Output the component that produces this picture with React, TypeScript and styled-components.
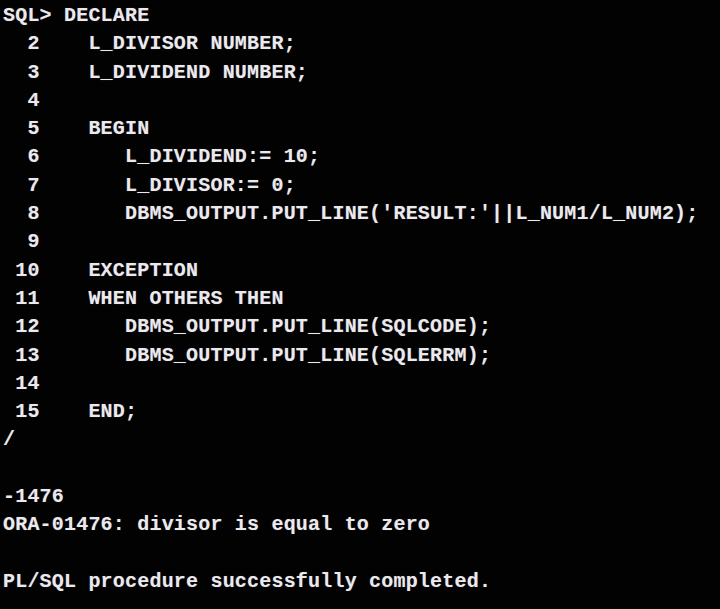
import React from "react";
import styled, { createGlobalStyle } from "styled-components";

const GlobalStyle = createGlobalStyle`
  html, body {
    margin: 0;
    padding: 0;
    background: #000;
  }
  #root {
    width: 720px;
    height: 609px;
  }
`;

const Screen = styled.main`
  width: 720px;
  height: 609px;
  background: #020202;
  overflow: hidden;
  box-sizing: border-box;
  padding: 2px 0 0 3px;
`;

const Console = styled.div`
  display: flex;
  flex-direction: column;
  font-family: "Liberation Mono", "DejaVu Sans Mono", monospace;
  font-weight: 700;
  font-size: 20px;
  letter-spacing: 0.2px;
  color: #ebe9ee;
  text-shadow: 0 0 1px rgba(235, 233, 238, 0.35);
`;

const Row = styled.div`
  height: 28.3px;
  line-height: 28.3px;
  white-space: pre;
`;

const lines: string[] = [
  "SQL> DECLARE",
  "  2    L_DIVISOR NUMBER;",
  "  3    L_DIVIDEND NUMBER;",
  "  4",
  "  5    BEGIN",
  "  6       L_DIVIDEND:= 10;",
  "  7       L_DIVISOR:= 0;",
  "  8       DBMS_OUTPUT.PUT_LINE('RESULT:'||L_NUM1/L_NUM2);",
  "  9",
  " 10    EXCEPTION",
  " 11    WHEN OTHERS THEN",
  " 12       DBMS_OUTPUT.PUT_LINE(SQLCODE);",
  " 13       DBMS_OUTPUT.PUT_LINE(SQLERRM);",
  " 14",
  " 15    END;",
  "/",
  "",
  "-1476",
  "ORA-01476: divisor is equal to zero",
  "",
  "PL/SQL procedure successfully completed.",
];

export default function App() {
  return (
    <>
      <GlobalStyle />
      <Screen>
        <Console>
          {lines.map((l, i) => (
            <Row key={i}>{l || " "}</Row>
          ))}
        </Console>
      </Screen>
    </>
  );
}
